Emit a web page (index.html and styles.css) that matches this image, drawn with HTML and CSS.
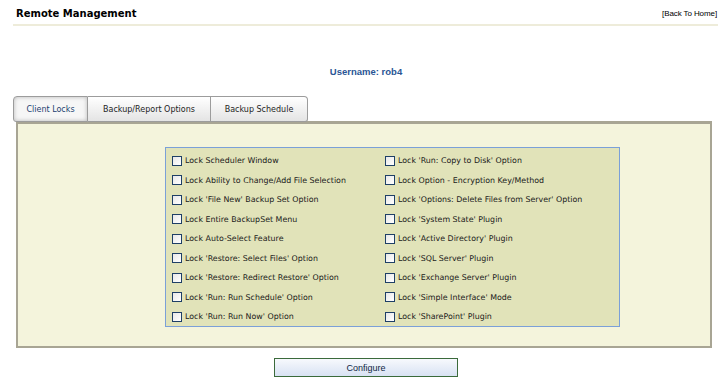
FILE: index.html
```html
<!DOCTYPE html>
<html lang="en">
<head>
    <meta charset="UTF-8">
    <title>Remote Management</title>
    <link rel="stylesheet" href="styles.css">
</head>
<body>
    <div class="header">
        <h1 class="title">Remote Management</h1>
        <a class="home" href="#">[Back To Home]</a>
    </div>

    <div class="user">Username: rob4</div>

    <div class="tabs">
        <div class="tab active">Client Locks</div>
        <div class="tab">Backup/Report Options</div>
        <div class="tab">Backup Schedule</div>
    </div>

    <div class="panel">
        <div class="locks">
            <label class="lock"><input type="checkbox"> Lock Scheduler Window</label>
            <label class="lock"><input type="checkbox"> Lock 'Run: Copy to Disk' Option</label>
            <label class="lock"><input type="checkbox"> Lock Ability to Change/Add File Selection</label>
            <label class="lock"><input type="checkbox"> Lock Option - Encryption Key/Method</label>
            <label class="lock"><input type="checkbox"> Lock 'File New' Backup Set Option</label>
            <label class="lock"><input type="checkbox"> Lock 'Options: Delete Files from Server' Option</label>
            <label class="lock"><input type="checkbox"> Lock Entire BackupSet Menu</label>
            <label class="lock"><input type="checkbox"> Lock 'System State' Plugin</label>
            <label class="lock"><input type="checkbox"> Lock Auto-Select Feature</label>
            <label class="lock"><input type="checkbox"> Lock 'Active Directory' Plugin</label>
            <label class="lock"><input type="checkbox"> Lock 'Restore: Select Files' Option</label>
            <label class="lock"><input type="checkbox"> Lock 'SQL Server' Plugin</label>
            <label class="lock"><input type="checkbox"> Lock 'Restore: Redirect Restore' Option</label>
            <label class="lock"><input type="checkbox"> Lock 'Exchange Server' Plugin</label>
            <label class="lock"><input type="checkbox"> Lock 'Run: Run Schedule' Option</label>
            <label class="lock"><input type="checkbox"> Lock 'Simple Interface' Mode</label>
            <label class="lock"><input type="checkbox"> Lock 'Run: Run Now' Option</label>
            <label class="lock"><input type="checkbox"> Lock 'SharePoint' Plugin</label>
        </div>
    </div>

    <div class="actions">
        <button class="configure">Configure</button>
    </div>
</body>
</html>
```

FILE: styles.css
```css
body {
    margin: 0;
    background-color: #ffffff;
    font-family: "DejaVu Sans", Verdana, sans-serif;
    color: #000000;
}

.header {
    display: flex;
    justify-content: space-between;
    align-items: flex-end;
    margin: 0 10px 0 13px;
    padding: 7px 1px 4px 3px;
    border-bottom: 2px solid #eeecda;
}

.title {
    margin: 0;
    font-size: 10px;
    font-weight: bold;
    line-height: 13px;
}

.home {
    font-family: "Liberation Sans", Arial, sans-serif;
    font-size: 8px;
    letter-spacing: -0.1px;
    color: #000000;
    text-decoration: none;
    line-height: 13px;
}

.user {
    margin-top: 39px;
    text-align: center;
    font-family: "Liberation Sans", Arial, sans-serif;
    font-size: 9.5px;
    font-weight: bold;
    color: #2a5595;
    line-height: 14px;
    padding-left: 4px;
}

.tabs {
    display: flex;
    margin: 17px 0 0 13px;
    height: 26px;
}

.tab {
    display: flex;
    align-items: center;
    justify-content: center;
    height: 24px;
    border: 1px solid #9c9c9c;
    border-left: none;
    background: linear-gradient(#ffffff, #e4e4e4);
    font-size: 8px;
    color: #1e1e1e;
}

.tab:first-child {
    border-left: 1px solid #9c9c9c;
    border-radius: 4px 0 0 3px;
}

.tab:last-child {
    border-radius: 0 4px 3px 0;
}

.tab.active {
    width: 73px;
    background: #f6f6f6;
    box-shadow: inset 0 0 4px #b8b8b8;
    color: #1d3f70;
}

.tab:nth-child(2) {
    width: 122px;
}

.tab:nth-child(3) {
    width: 96px;
}

.panel {
    margin: -1px 16px 0 16px;
    padding: 23px 0 19px 147px;
    background-color: #f4f4dc;
    border: 2px solid #a8a594;
    border-top-width: 3px;
}

.locks {
    display: grid;
    grid-template-columns: 213px 1fr;
    width: 441px;
    height: 175px;
    padding: 3px 6px 0 6px;
    background-color: #e1e3b9;
    border: 1px solid #7ba0d8;
    overflow: hidden;
}

.lock {
    display: flex;
    align-items: center;
    height: 19.5px;
    font-size: 7.9px;
    color: #1a1a1a;
    white-space: nowrap;
}

.lock input {
    appearance: none;
    width: 10px;
    height: 10px;
    margin: 0 3px 0 0;
    border: 1px solid #1e3f66;
    background: linear-gradient(135deg, #e8e8e8, #ffffff);
}

.actions {
    display: flex;
    justify-content: center;
    margin-top: 10px;
    padding-left: 4px;
}

.configure {
    width: 184px;
    height: 19px;
    border: 1px solid #3b6a3b;
    background: linear-gradient(#f7f9fd, #d8e2f3);
    font-family: "Liberation Sans", Arial, sans-serif;
    font-size: 9px;
    color: #0f1f44;
    padding: 0;
}
```
